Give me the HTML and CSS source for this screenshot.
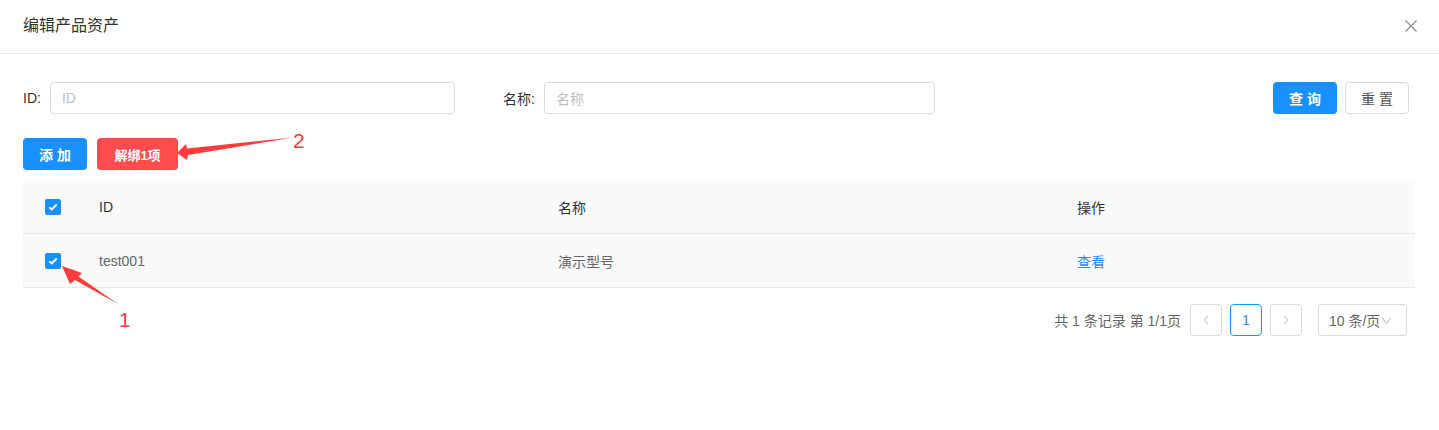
FILE: index.html
```html
<!DOCTYPE html>
<html lang="zh-CN">
<head>
<meta charset="utf-8">
<title>编辑产品资产</title>
<link rel="stylesheet" href="styles.css">
</head>
<body>
<div class="modal">
  <div class="modal-header">
    <span class="modal-title">编辑产品资产</span>
    <span class="close">
      <svg width="14" height="14" viewBox="0 0 14 14"><path d="M1.5 1.5 L12.5 12.5 M12.5 1.5 L1.5 12.5" stroke="#8c8c8c" stroke-width="1.2" fill="none"/></svg>
    </span>
  </div>
  <div class="modal-body">
    <div class="search">
      <div class="field">
        <label class="label">ID:</label>
        <div class="input"><span class="ph">ID</span></div>
      </div>
      <div class="field">
        <label class="label">名称:</label>
        <div class="input"><span class="ph">名称</span></div>
      </div>
      <div class="search-actions">
        <button class="btn btn-primary">查 询</button>
        <button class="btn btn-default">重 置</button>
      </div>
    </div>
    <div class="toolbar">
      <button class="btn btn-primary">添 加</button>
      <button class="btn btn-danger">解绑1项</button>
    </div>
    <div class="table">
      <div class="tr thead">
        <div class="td check"><span class="cb"><svg width="10" height="8" viewBox="0 0 10 8"><path d="M1.3 4.2 L3.8 6.4 L8.7 1.5" stroke="#fff" stroke-width="1.8" fill="none"/></svg></span></div>
        <div class="td">ID</div>
        <div class="td">名称</div>
        <div class="td">操作</div>
      </div>
      <div class="tr tbody">
        <div class="td check"><span class="cb"><svg width="10" height="8" viewBox="0 0 10 8"><path d="M1.3 4.2 L3.8 6.4 L8.7 1.5" stroke="#fff" stroke-width="1.8" fill="none"/></svg></span></div>
        <div class="td">test001</div>
        <div class="td">演示型号</div>
        <div class="td"><a class="link">查看</a></div>
      </div>
    </div>
    <div class="pagination">
      <span class="total">共 1 条记录 第 1/1页</span>
      <span class="pg pg-btn"><svg width="8" height="12" viewBox="0 0 8 12"><path d="M6 1.5 L2 6 L6 10.5" stroke="#c8c8c8" stroke-width="1.1" fill="none"/></svg></span>
      <span class="pg pg-active">1</span>
      <span class="pg pg-btn"><svg width="8" height="12" viewBox="0 0 8 12"><path d="M2 1.5 L6 6 L2 10.5" stroke="#c8c8c8" stroke-width="1.1" fill="none"/></svg></span>
      <span class="size">10 条/页<svg width="11" height="7" viewBox="0 0 11 7"><path d="M1 1 L5.5 6 L10 1" stroke="#bfbfbf" stroke-width="1.1" fill="none"/></svg></span>
    </div>
  </div>
  <svg class="annot" width="1439" height="430" viewBox="0 0 1439 430">
    <polygon points="177,153 186,144 187,148.5 293,137.5 188,155 187,160" fill="#ff3b3b"/>
    <polygon points="62,266 82,273 78.5,276.5 118,304 75,280 70,284" fill="#ff3b3b"/>
  </svg>
  <span class="num num2">2</span>
  <span class="num num1">1</span>
</div>
</body>
</html>
```

FILE: styles.css
```css
* { box-sizing: border-box; }
html, body { margin: 0; padding: 0; background: #fff; }
body {
  font-family: "Liberation Sans", "Noto Sans CJK SC", sans-serif;
  font-size: 14px;
  color: #333;
}
.modal { position: relative; width: 1439px; height: 430px; }
.modal-header {
  height: 54px;
  border-bottom: 1px solid #e8e8e8;
  display: flex;
  align-items: center;
  justify-content: space-between;
  padding: 0 21px 0 23px;
}
.modal-title { font-size: 16px; color: #333; line-height: 22px; margin-top: -1px; }
.close { display: flex; margin-top: -1px; }
.modal-body { padding: 28px 24px 0 23px; }
.search { display: flex; align-items: center; height: 32px; }
.field { display: flex; align-items: center; width: 432px; margin-right: 48px; }
.label { color: #333; white-space: nowrap; margin-right: 9px; }
.input {
  flex: 1;
  height: 32px;
  border: 1px solid #d9d9d9;
  border-radius: 4px;
  display: flex;
  align-items: center;
  padding: 0 11px;
}
.ph { color: #bfbfbf; }
.search-actions { margin-left: auto; margin-right: 6px; display: flex; gap: 8px; }
.btn {
  height: 32px;
  width: 64px;
  border-radius: 4px;
  font-family: inherit;
  font-size: 14px;
  border: 1px solid transparent;
  padding: 0;
  cursor: pointer;
}
.btn-primary { background: #1890ff; color: #fff; font-weight: bold; }
.btn-default { background: #fff; border-color: #d9d9d9; color: #555; }
.btn-danger { background: #ff4d4f; color: #fff; width: 81px; font-size: 13px; font-weight: bold; }
.toolbar { display: flex; gap: 10px; margin-top: 24px; }
.table { margin-top: 10px; }
.tr {
  display: grid;
  grid-template-columns: 54px 459px 519px 1fr;
  height: 54px;
  background: #fafafa;
  border-bottom: 1px solid #e8e8e8;
  align-items: center;
}
.td { padding-left: 22px; }
.thead .td { color: #333; }
.tbody .td { color: #666; }
.check { display: flex; align-items: center; padding-left: 22px; }
.cb {
  width: 16px; height: 16px;
  border-radius: 2px;
  background: #1890ff;
  display: flex; align-items: center; justify-content: center;
}
.link { color: #1890ff; }
.pagination {
  display: flex;
  justify-content: flex-end;
  align-items: center;
  margin-top: 16px;
  margin-right: 8px;
  color: #666;
}
.total { margin-right: 9px; }
.pg {
  width: 32px; height: 32px;
  border: 1px solid #d9d9d9;
  border-radius: 4px;
  display: flex; align-items: center; justify-content: center;
  margin-right: 8px;
}
.pg-active { border-color: #1890ff; color: #1890ff; }
.pg:nth-of-type(4) { margin-right: 16px; }
.size {
  width: 89px; height: 32px;
  border: 1px solid #d9d9d9;
  border-radius: 4px;
  display: flex; align-items: center;
  padding-left: 10px;
  gap: 1px;
  color: #666;
}
.annot { position: absolute; left: 0; top: 0; pointer-events: none; }
.num { position: absolute; color: #ff3b3b; font-size: 21px; line-height: 1; font-family: "Liberation Sans", sans-serif; }
.num2 { left: 293px; top: 130px; }
.num1 { left: 119px; top: 309px; }
```
